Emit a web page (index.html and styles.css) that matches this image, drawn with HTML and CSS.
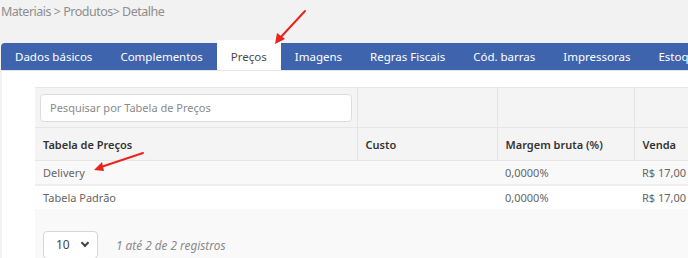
FILE: index.html
```html
<!DOCTYPE html>
<html lang="pt-BR">
<head>
    <meta charset="UTF-8">
    <title>Produtos - Detalhe</title>
    <link rel="stylesheet" href="styles.css">
</head>
<body>
    <div class="breadcrumb">Materiais &gt; Produtos&gt; Detalhe</div>

    <div class="tabs">
        <div class="tab">Dados básicos</div>
        <div class="tab">Complementos</div>
        <div class="tab active">Preços</div>
        <div class="tab">Imagens</div>
        <div class="tab">Regras Fiscais</div>
        <div class="tab">Cód. barras</div>
        <div class="tab">Impressoras</div>
        <div class="tab">Estoque</div>
    </div>

    <div class="panel">
        <div class="grid">
            <table class="prices">
                <colgroup>
                    <col class="c-name">
                    <col class="c-cost">
                    <col class="c-margin">
                    <col class="c-sale">
                </colgroup>
                <thead>
                    <tr class="filter-row">
                        <th><div class="search">Pesquisar por Tabela de Preços</div></th>
                        <th></th>
                        <th></th>
                        <th></th>
                    </tr>
                    <tr class="head-row">
                        <th>Tabela de Preços</th>
                        <th>Custo</th>
                        <th>Margem bruta (%)</th>
                        <th>Venda</th>
                    </tr>
                </thead>
                <tbody>
                    <tr class="odd">
                        <td>Delivery</td>
                        <td></td>
                        <td>0,0000%</td>
                        <td>R$ 17,00</td>
                    </tr>
                    <tr>
                        <td>Tabela Padrão</td>
                        <td></td>
                        <td>0,0000%</td>
                        <td>R$ 17,00</td>
                    </tr>
                </tbody>
            </table>

            <div class="pager">
                <div class="page-size">10 <span class="caret"></span></div>
                <span class="info">1 até 2 de 2 registros</span>
            </div>
        </div>
    </div>

    <!-- setas de destaque -->
    <svg class="marks" width="688" height="258" viewBox="0 0 688 258">
        <g stroke="#e8241c" stroke-width="2" stroke-linecap="round" fill="#e8241c">
            <line x1="305" y1="11" x2="280" y2="38"/>
            <polygon points="275,44 277,33 285,39" stroke="none"/>
            <line x1="143" y1="153" x2="101" y2="167"/>
            <polygon points="94,170 102,162 104,171" stroke="none"/>
        </g>
    </svg>
</body>
</html>
```

FILE: styles.css
```css
* {
    margin: 0;
    padding: 0;
    box-sizing: border-box;
}

body {
    width: 688px;
    height: 258px;
    overflow: hidden;
    background: #f2f2f2;
    font-family: "Noto Sans", "Open Sans", sans-serif;
    color: #555;
}

/* 面包屑 */
.breadcrumb {
    height: 43px;
    padding: 3px 0 0 1px;
    font-size: 12.5px;
    color: #8e8e8e;
    letter-spacing: -0.5px;
}

/* 标签栏 */
.tabs {
    display: flex;
    align-items: flex-end;
    height: 27px;
    margin-left: 1px;
    width: 760px;
    background: #3f64ae;
    border-radius: 4px 0 0 0;
    white-space: nowrap;
}

.tab {
    height: 27px;
    line-height: 27px;
    padding: 0 14px;
    font-size: 11.5px;
    color: #fff;
}

.tab.active {
    height: 30px;
    line-height: 33px;
    padding: 0 14px;
    background: #fff;
    color: #4a4a4a;
}

/* 内容面板 */
.panel {
    margin-left: 2px;
    height: 200px;
    padding: 16px 0 0 33px;
    background: #fff;
    border-top: 1px solid #e6e6e6;
}

.grid {
    width: 720px;
    height: 100%;
    background: #f9f9f9;
}

.prices {
    border-collapse: collapse;
    table-layout: fixed;
    width: 720px;
    font-size: 11px;
}

.c-name { width: 322px; }
.c-cost { width: 140px; }
.c-margin { width: 137px; }

.prices th {
    text-align: left;
    font-weight: 600;
    color: #333;
    background: #f4f4f4;
    border-right: 1px solid #e4e4e4;
}

.filter-row th {
    height: 40px;
    padding: 0 5px;
    border-top: 1px solid #e8e8e8;
}

.search {
    height: 28px;
    line-height: 26px;
    padding: 0 9px;
    background: #fff;
    border: 1px solid #dcdcdc;
    border-radius: 4px;
    font-weight: 400;
    color: #8a8a8a;
}

.head-row th {
    height: 33px;
    padding: 0 8px;
    border-top: 1px solid #e6e6e6;
    border-bottom: 1px solid #e6e6e6;
}

.prices td {
    height: 24px;
    padding: 0 8px;
    color: #666;
    background: #fff;
}

.prices tr.odd td {
    background: #f9f9f9;
    border-bottom: 2px solid #eeeeee;
}

/* 分页 */
.pager {
    display: flex;
    align-items: center;
    gap: 18px;
    padding: 22px 0 0 8px;
}

.page-size {
    display: flex;
    align-items: center;
    justify-content: space-between;
    width: 55px;
    height: 28px;
    padding: 0 9px 0 12px;
    background: #fff;
    border: 1px solid #d6d6d6;
    border-radius: 4px;
    font-size: 12px;
    color: #444;
}

.caret {
    width: 6px;
    height: 6px;
    border-right: 2px solid #444;
    border-bottom: 2px solid #444;
    transform: translateY(-2px) rotate(45deg);
}

.info {
    font-size: 11.8px;
    font-style: italic;
    color: #8a8a8a;
}

/* 箭头覆盖层 */
.marks {
    position: absolute;
    top: 0;
    left: 0;
    pointer-events: none;
}
```
